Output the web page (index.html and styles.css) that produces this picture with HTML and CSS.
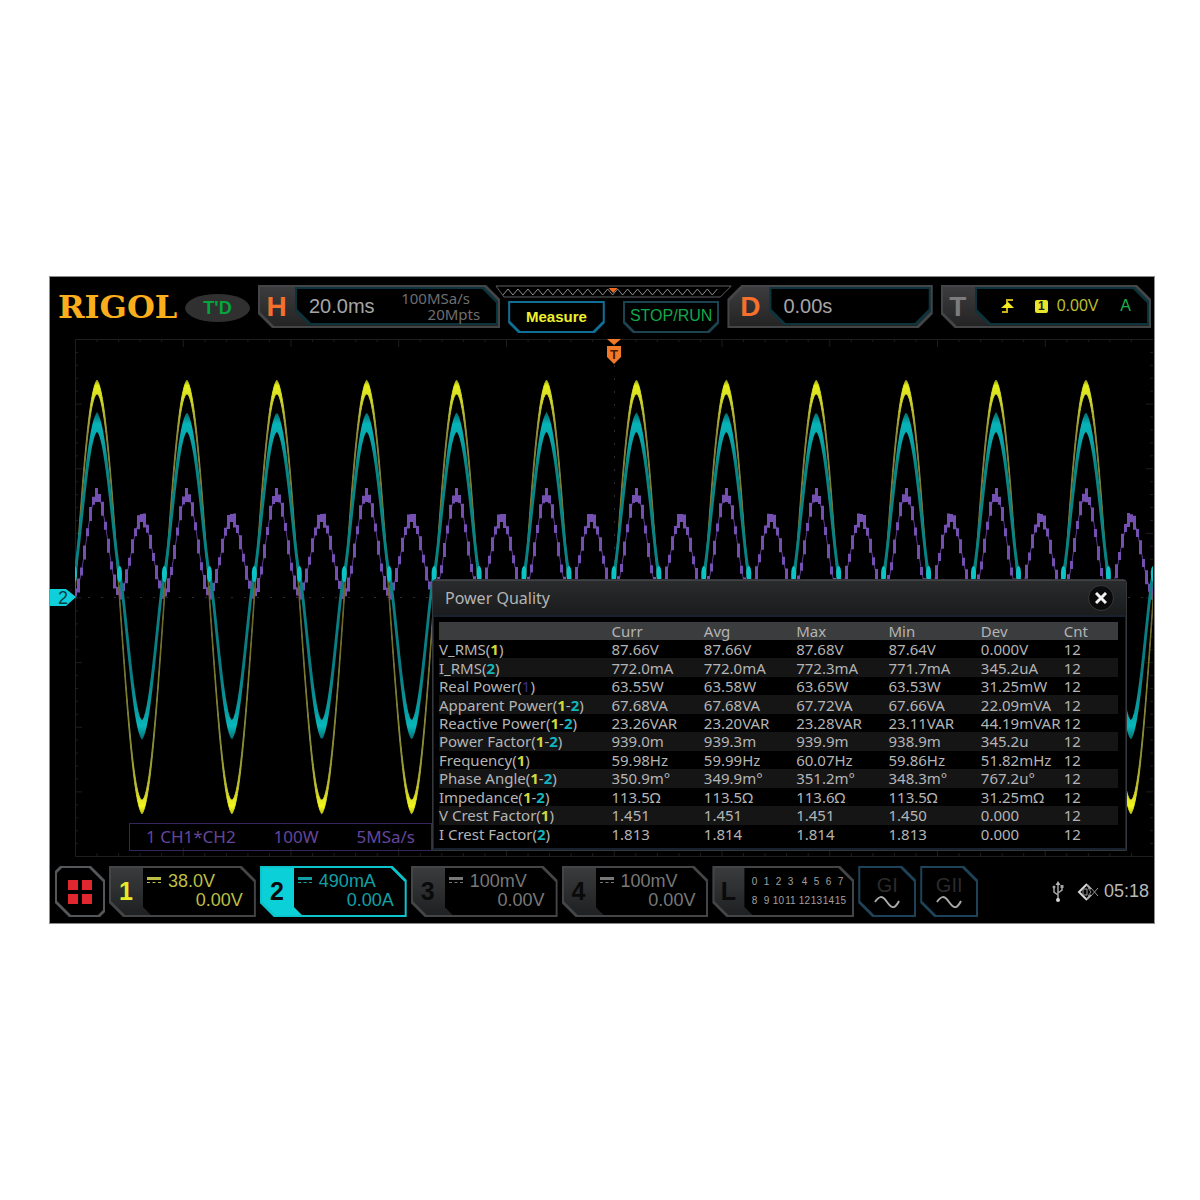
FILE: index.html
```html
<!DOCTYPE html>
<html lang="en">
<head>
    <meta charset="UTF-8">
    <meta name="viewport" content="width=device-width, initial-scale=1.0">
    <title>RIGOL - Power Quality</title>
    <link rel="stylesheet" href="styles.css">
</head>
<body>
    <main class="screen">
        <header class="topbar">
            <div class="logo">RIGOL</div>
            <div class="trig-state">T'D</div>

            <div class="frame panel">
                <span class="panel-tab orange">H</span>
                <div class="frame panel-value">
                    <span class="reading">20.0ms</span>
                    <div class="sampling">
                        <span>100MSa/s</span>
                        <span class="depth">20Mpts</span>
                    </div>
                </div>
            </div>

            <div class="center">
                <svg class="memory-bar" viewBox="0 0 238 13" preserveAspectRatio="none" aria-hidden="true">
                    <path d="M1 1H237L226 12H9Z" fill="none" stroke="#5c5f61"/>
                    <path id="zigzag" fill="none" stroke="#8c8e8f"/>
                    <path d="M114 3H123L118.500 8Z" fill="#f26a1b"/>
                </svg>
                <div class="center-buttons">
                    <button type="button" class="frame key key-measure">Measure</button>
                    <button type="button" class="frame key key-run">STOP/RUN</button>
                </div>
            </div>

            <div class="frame panel panel-delay">
                <span class="panel-tab orange">D</span>
                <div class="frame panel-value">
                    <span class="reading">0.00s</span>
                </div>
            </div>

            <div class="frame panel">
                <span class="panel-tab grey">T</span>
                <div class="frame panel-value trigger">
                    <svg width="14" height="16" viewBox="0 0 14 16" aria-hidden="true">
                        <path d="M1 14H6V2H12" fill="none" stroke="#c9b21c" stroke-width="2"/>
                        <path d="M0 10L7 4L13 10Z" fill="#f4ee20"/>
                    </svg>
                    <span class="source">1</span>
                    <span class="level">0.00V</span>
                    <span class="mode">A</span>
                </div>
            </div>
        </header>

        <section class="plot">
            <svg class="waves" viewBox="0 0 1104 528" aria-label="Waveforms">
                <defs>
                    <linearGradient id="gradCh1" gradientUnits="userSpaceOnUse" x1="0" y1="46" x2="0" y2="482">
                        <stop offset="0" stop-color="#8c9210"/>
                        <stop offset="0.015" stop-color="#e6ee1c"/>
                        <stop offset="0.05" stop-color="#d2d82c"/>
                        <stop offset="0.13" stop-color="#8f8a3c"/>
                        <stop offset="0.5" stop-color="#6b6428"/>
                        <stop offset="0.86" stop-color="#8f943a"/>
                        <stop offset="0.94" stop-color="#c8c82c"/>
                        <stop offset="0.98" stop-color="#f4f81c"/>
                        <stop offset="1" stop-color="#b0b610"/>
                    </linearGradient>
                    <linearGradient id="gradCh2" gradientUnits="userSpaceOnUse" x1="0" y1="78" x2="0" y2="406">
                        <stop offset="0" stop-color="#045c5e"/>
                        <stop offset="0.04" stop-color="#07b4b8"/>
                        <stop offset="0.08" stop-color="#08a8ac"/>
                        <stop offset="0.16" stop-color="#088684"/>
                        <stop offset="0.8" stop-color="#0a7c82"/>
                        <stop offset="0.92" stop-color="#08a0a4"/>
                        <stop offset="0.96" stop-color="#08b8bc"/>
                        <stop offset="1" stop-color="#057072"/>
                    </linearGradient>
                    <clipPath id="plotArea"><rect x="25" y="6" width="1078" height="518"/></clipPath>
                </defs>
                <path id="grid" fill="none" stroke="#1f1d1d"/>
                <path id="axes" fill="none" stroke="#332b2b" stroke-dasharray="2 11"/>
                <g clip-path="url(#plotArea)">
                    <path id="math" fill="none" stroke="#5a3a8c"/>
                    <path id="mathSamples" fill="none" stroke="#7450b0" stroke-width="3"/>
                    <path id="ch1" fill="url(#gradCh1)" stroke="url(#gradCh1)"/>
                    <path id="ch2" fill="url(#gradCh2)" stroke="url(#gradCh2)" stroke-width="2"/>
                    <g id="crossings" fill="#0bc4c8"></g>
                </g>
                <path d="M0 256H16L26 264L16 273H0Z" fill="#0fd0da"/>
                <text x="8" y="271" class="marker-ch2">2</text>
                <path d="M557 6H571L564 12Z" fill="#f07a2a"/>
                <path d="M557 13H571V24L564 31L557 24Z" fill="#f07a2a"/>
                <text x="564" y="26" class="marker-trig">T</text>
            </svg>

            <div class="math-label">
                <span>1 CH1*CH2</span>
                <span>100W</span>
                <span>5MSa/s</span>
            </div>

            <section class="window">
                <div class="window-head">
                    <h1>Power Quality</h1>
                    <button type="button" class="close" aria-label="Close">
                        <svg width="12" height="12" viewBox="0 0 12 12"><path d="M1 1L11 11M11 1L1 11" stroke="#f2f2f2" stroke-width="3"/></svg>
                    </button>
                </div>
                <div class="window-body">
                    <table>
                        <colgroup>
                            <col class="col-name"><col class="col-stat"><col class="col-stat"><col class="col-stat"><col class="col-stat"><col class="col-dev"><col>
                        </colgroup>
                        <thead>
                            <tr><th></th><th>Curr</th><th>Avg</th><th>Max</th><th>Min</th><th>Dev</th><th>Cnt</th></tr>
                        </thead>
                        <tbody>
                            <tr><td>V_RMS(<b class="c1">1</b>)</td><td>87.66V</td><td>87.66V</td><td>87.68V</td><td>87.64V</td><td>0.000V</td><td>12</td></tr>
                            <tr><td>I_RMS(<b class="c2">2</b>)</td><td>772.0mA</td><td>772.0mA</td><td>772.3mA</td><td>771.7mA</td><td>345.2uA</td><td>12</td></tr>
                            <tr><td>Real Power(<span class="cm">1</span>)</td><td>63.55W</td><td>63.58W</td><td>63.65W</td><td>63.53W</td><td>31.25mW</td><td>12</td></tr>
                            <tr><td>Apparent Power(<b class="c1">1</b>-<b class="c2">2</b>)</td><td>67.68VA</td><td>67.68VA</td><td>67.72VA</td><td>67.66VA</td><td>22.09mVA</td><td>12</td></tr>
                            <tr><td>Reactive Power(<b class="c1">1</b>-<b class="c2">2</b>)</td><td>23.26VAR</td><td>23.20VAR</td><td>23.28VAR</td><td>23.11VAR</td><td>44.19mVAR</td><td>12</td></tr>
                            <tr><td>Power Factor(<b class="c1">1</b>-<b class="c2">2</b>)</td><td>939.0m</td><td>939.3m</td><td>939.9m</td><td>938.9m</td><td>345.2u</td><td>12</td></tr>
                            <tr><td>Frequency(<b class="c1">1</b>)</td><td>59.98Hz</td><td>59.99Hz</td><td>60.07Hz</td><td>59.86Hz</td><td>51.82mHz</td><td>12</td></tr>
                            <tr><td>Phase Angle(<b class="c1">1</b>-<b class="c2">2</b>)</td><td>350.9m°</td><td>349.9m°</td><td>351.2m°</td><td>348.3m°</td><td>767.2u°</td><td>12</td></tr>
                            <tr><td>Impedance(<b class="c1">1</b>-<b class="c2">2</b>)</td><td>113.5Ω</td><td>113.5Ω</td><td>113.6Ω</td><td>113.5Ω</td><td>31.25mΩ</td><td>12</td></tr>
                            <tr><td>V Crest Factor(<b class="c1">1</b>)</td><td>1.451</td><td>1.451</td><td>1.451</td><td>1.450</td><td>0.000</td><td>12</td></tr>
                            <tr><td>I Crest Factor(<b class="c2">2</b>)</td><td>1.813</td><td>1.814</td><td>1.814</td><td>1.813</td><td>0.000</td><td>12</td></tr>
                        </tbody>
                    </table>
                </div>
            </section>
        </section>

        <footer class="bottombar">
            <button type="button" class="frame menu" aria-label="Menu">
                <span></span><span></span><span></span><span></span>
            </button>

            <div class="frame channel ch-1">
                <span class="channel-tab">1</span>
                <div class="channel-value">
                    <div class="scale"><i class="dc"></i>38.0V</div>
                    <div class="offset">0.00V</div>
                </div>
            </div>
            <div class="frame channel ch-2">
                <span class="channel-tab">2</span>
                <div class="channel-value">
                    <div class="scale"><i class="dc"></i>490mA</div>
                    <div class="offset">0.00A</div>
                </div>
            </div>
            <div class="frame channel">
                <span class="channel-tab">3</span>
                <div class="channel-value">
                    <div class="scale"><i class="dc"></i>100mV</div>
                    <div class="offset">0.00V</div>
                </div>
            </div>
            <div class="frame channel">
                <span class="channel-tab">4</span>
                <div class="channel-value">
                    <div class="scale"><i class="dc"></i>100mV</div>
                    <div class="offset">0.00V</div>
                </div>
            </div>

            <div class="frame channel logic">
                <span class="channel-tab">L</span>
                <div class="channel-value digits">
                    <span>0</span><span>1</span><span>2</span><span>3</span><i></i><span>4</span><span>5</span><span>6</span><span>7</span>
                    <span>8</span><span>9</span><span>10</span><span>11</span><i></i><span>12</span><span>13</span><span>14</span><span>15</span>
                </div>
            </div>

            <button type="button" class="frame gen">
                GI
                <svg width="26" height="14" viewBox="0 0 26 14"><path d="M1 7C5 1 8 0 13 7S21 14 25 6" fill="none" stroke="#a8a8a8" stroke-width="2"/></svg>
            </button>
            <button type="button" class="frame gen">
                GII
                <svg width="26" height="14" viewBox="0 0 26 14"><path d="M1 7C5 1 8 0 13 7S21 14 25 6" fill="none" stroke="#a8a8a8" stroke-width="2"/></svg>
            </button>

            <div class="status">
                <svg width="12" height="22" viewBox="0 0 12 22" aria-label="USB">
                    <path d="M6 3V18M6 14L2 11V6M6 12L10 9V5" fill="none" stroke="#a5a5a5" stroke-width="1.500"/>
                    <path d="M6 0L8.500 4H3.500Z" fill="#b5b5b5"/>
                    <path d="M8.500 4H11.500V7H8.500Z" fill="#a5a5a5"/>
                    <circle cx="2" cy="6" r="1.500" fill="#a5a5a5"/>
                    <circle cx="6" cy="19" r="2" fill="#d5d5d5"/>
                </svg>
                <svg width="22" height="18" viewBox="0 0 22 18" aria-label="Muted">
                    <path d="M10 1L2 9L10 17" fill="none" stroke="#d8d8d8" stroke-width="2"/>
                    <path d="M6 6H10V12H6Z" fill="none" stroke="#9a9a9a"/>
                    <path d="M10 2L14 6M10 16L14 12" fill="none" stroke="#aaa" stroke-width="2"/>
                    <path d="M11 5L14 9L11 13" fill="none" stroke="#888"/>
                    <path d="M14 5L21 13M21 5L14 13" stroke="#9a9a9a"/>
                </svg>
                <span>05:18</span>
            </div>
        </footer>
    </main>
    <script src="script.js"></script>
</body>
</html>
```

FILE: styles.css
```css
body {
    font-family: "Liberation Sans", Arial, sans-serif;
    background-color: #fff;
    margin: 0;
    padding: 277px 46px 40px 50px;
}

button {
    font-family: inherit;
    border: none;
    padding: 0;
    margin: 0;
    cursor: pointer;
}

.screen {
    background: #000;
    outline: 1px solid #8c8c8c;
}

/* Box with two corners cut off: edge colour outside, face colour inside */
.frame {
    --cut: 14px;
    --edge: #434546;
    --face: #000;
    --shape: polygon(0 0, calc(100% - var(--cut)) 0, 100% var(--cut), 100% 100%, var(--cut) 100%, 0 calc(100% - var(--cut)));
    position: relative;
    isolation: isolate;
    background: var(--edge);
    clip-path: var(--shape);
}

.frame::before {
    content: "";
    position: absolute;
    inset: 2px;
    z-index: -1;
    background: var(--face);
    clip-path: var(--shape);
}

/* Top bar */
.topbar {
    display: grid;
    grid-template-columns: 119px 65px 243fr 212fr 206fr 211fr;
    column-gap: 8px;
    align-items: start;
    height: 48px;
    padding: 8px 3px 0 8px;
}

.logo {
    font-family: "DejaVu Serif", serif;
    font-weight: bold;
    font-size: 32px;
    line-height: 44px;
    color: #fbae1c;
}

.trig-state {
    margin-top: 9px;
    background: #303030;
    border-radius: 50%;
    color: #06a53c;
    font-size: 18px;
    font-weight: bold;
    line-height: 28px;
    text-align: center;
}

.panel {
    --face: linear-gradient(#3c3c3e, #242425);
    display: flex;
    height: 43px;
}

.panel-tab {
    width: 37px;
    font-size: 28px;
    font-weight: bold;
    line-height: 44px;
    text-align: center;
}

.panel-tab.orange {
    color: #f4702c;
}

.panel-tab.grey {
    width: 34px;
    color: #7c7c7e;
}

.panel-value {
    --edge: #0d333d;
    flex: 1;
    display: flex;
    align-items: center;
    justify-content: space-between;
    margin: 2px 2px 3px 0;
    padding: 0 18px 0 14px;
}

.panel-delay {
    --shape: polygon(var(--cut) 0, 100% 0, 100% calc(100% - var(--cut)), calc(100% - var(--cut)) 100%, 0 100%, 0 var(--cut));
}

.panel-delay .panel-tab {
    width: 42px;
    padding-left: 4px;
    box-sizing: border-box;
}

.panel-delay .panel-value {
    --shape: polygon(0 0, 100% 0, 100% calc(100% - var(--cut)), calc(100% - var(--cut)) 100%, var(--cut) 100%, 0 calc(100% - var(--cut)));
}

.reading {
    font-size: 20px;
    color: #a6a6a8;
}

.sampling {
    display: flex;
    flex-direction: column;
    width: 79px;
    font-family: "Noto Sans", sans-serif;
    font-size: 15px;
    line-height: 16px;
    color: #6e6e70;
}

.sampling .depth {
    text-align: right;
}

.trigger {
    justify-content: flex-start;
    padding: 0 18px 0 26px;
}

.source {
    width: 13px;
    margin: 0 9px 0 20px;
    border-radius: 2px;
    background: #e8e62a;
    color: #222;
    font-size: 12px;
    font-weight: bold;
    line-height: 13px;
    text-align: center;
}

.level {
    margin-right: auto;
    font-size: 16px;
    color: #b9bd2c;
}

.mode {
    font-size: 16px;
    color: #1fae4c;
}

.memory-bar {
    display: block;
    width: calc(100% + 26px);
    height: 13px;
    margin: 0 -13px 3px;
}

.center-buttons {
    display: grid;
    grid-template-columns: 1fr 1fr;
    gap: 18px;
}

.key {
    --cut: 10px;
    --shape: polygon(0 0, 100% 0, 100% calc(100% - var(--cut)), calc(100% - var(--cut)) 100%, var(--cut) 100%, 0 calc(100% - var(--cut)));
    height: 32px;
    padding-bottom: 2px;
    white-space: nowrap;
}

.key-measure {
    --edge: #0f6f96;
    color: #eef02c;
    font-size: 15px;
    font-weight: bold;
}

.key-run {
    --edge: #1d4350;
    color: #12a84a;
    font-size: 16px;
}

/* Plot */
.plot {
    position: relative;
}

.waves {
    display: block;
    width: 100%;
}

.marker-ch2 {
    font-size: 18px;
    fill: #063c44;
}

.marker-trig {
    font-size: 13px;
    font-weight: bold;
    text-anchor: middle;
    fill: #4a1c06;
}

.math-label {
    position: absolute;
    left: 79px;
    right: 722px;
    bottom: 10px;
    display: flex;
    justify-content: space-between;
    padding: 0 16px;
    border: 1px solid #35265c;
    font-family: "Noto Sans", sans-serif;
    font-size: 17px;
    line-height: 26px;
    color: #64469c;
}

/* Power quality window */
.window {
    position: absolute;
    left: 382px;
    right: 27px;
    top: 246px;
    bottom: 10px;
    display: flex;
    flex-direction: column;
    box-sizing: border-box;
    border: 1px solid #34383c;
    border-radius: 4px 4px 0 0;
    background: #1d1e20;
    font-family: "Noto Sans", sans-serif;
    color: #b4b4b4;
}

.window-head {
    display: flex;
    align-items: center;
    justify-content: space-between;
    height: 34px;
    padding: 0 12px;
    border-top: 1px solid #404244;
    background: linear-gradient(#2a2b2d, #1a1b1d);
}

.window h1 {
    margin: 0;
    font-size: 16px;
    font-weight: normal;
}

.close {
    display: flex;
    align-items: center;
    justify-content: center;
    width: 26px;
    height: 26px;
    border: 1px solid #37383a;
    border-radius: 50%;
    background: #0a0a0a;
}

.window-body {
    flex: 1;
    padding: 5px 7px 0 5px;
    border: 2px solid #18222e;
    border-width: 2px 1px;
    background: #000;
}

table {
    width: 100%;
    height: 221px;
    border-collapse: collapse;
    table-layout: fixed;
    font-size: 15px;
    line-height: 18px;
    white-space: nowrap;
}

.col-name {
    width: 25.4%;
}

.col-stat {
    width: 13.6%;
}

.col-dev {
    width: 12.2%;
}

th, td {
    padding: 0;
    font-weight: normal;
    text-align: left;
}

thead {
    background: #3b3c3e;
}

tbody tr:nth-child(even) {
    background: #151516;
}

.c1 {
    color: #d2da3a;
}

.c2 {
    color: #14b4bc;
}

.cm {
    color: #3a2f86;
}

/* Bottom bar */
.bottombar {
    display: grid;
    grid-template-columns: 50px repeat(4, 147fr) 142fr 58fr 58fr 167fr;
    gap: 4px;
    padding: 5px 5px 6px 5px;
}

.bottombar .frame {
    height: 51px;
}

.menu {
    --edge: #55585a;
    --shape: polygon(5px 0, calc(100% - var(--cut)) 0, 100% var(--cut), 100% calc(100% - 5px), calc(100% - 5px) 100%, var(--cut) 100%, 0 calc(100% - var(--cut)), 0 5px);
    display: grid;
    grid-template-columns: 10px 10px;
    gap: 4px;
    place-content: center;
}

.menu span {
    height: 10px;
    background: #e0272f;
}

.channel {
    --face: linear-gradient(#3a3b3c, #1f2021);
    display: flex;
    color: #787878;
}

.channel-tab {
    width: 34px;
    font-size: 25px;
    font-weight: bold;
    line-height: 51px;
    text-align: center;
    color: #0a0a0a;
}

.channel-value {
    flex: 1;
    margin: 2px 2px 2px 0;
    padding: 4px 11px 0 4px;
    background: #000;
    clip-path: polygon(0 0, calc(100% - 14px) 0, 100% 14px, 100% 100%, 8px 100%, 0 calc(100% - 8px));
    font-size: 18px;
    line-height: 19px;
}

.scale {
    display: flex;
    gap: 7px;
}

.offset {
    text-align: right;
}

/* DC coupling: solid line over dashed line */
.dc {
    width: 14px;
    height: 2px;
    margin-top: 5px;
    border-top: 3px solid currentColor;
    border-bottom: 1px dashed currentColor;
}

.ch-1 {
    color: #bdbf45;
}

.ch-1 .channel-tab {
    color: #e8ea28;
}

.ch-2 {
    --edge: #0bc4cc;
    --face: #0bd0d8;
    color: #12a0a6;
}

.logic .channel-tab {
    width: 32px;
}

.digits {
    display: grid;
    grid-template-columns: repeat(4, 12px) 2px repeat(4, 12px);
    align-content: center;
    row-gap: 1px;
    padding: 0 0 0 4px;
    font-size: 10px;
    line-height: 18px;
    text-align: center;
    color: #a0a0a0;
}

.gen {
    --edge: #1e4358;
    display: flex;
    flex-direction: column;
    align-items: center;
    font-size: 20px;
    line-height: 20px;
    padding-top: 9px;
    color: #2b2b2d;
}

.status {
    display: flex;
    align-items: center;
    justify-content: flex-end;
    gap: 5px;
    font-size: 18px;
    color: #b8b8b8;
}

.status svg:first-child {
    margin-right: 8px;
}
```

FILE: script.js
```javascript
const PERIOD = 89.9;
const FIRST_PEAK = 47;
const ZERO = 264;
const LEFT = 25;
const RIGHT = 1103;

function set(id, d) {
    document.getElementById(id).setAttribute('d', d);
}

// distance to the nearest positive peak
function fromPeak(x) {
    const t = (x - FIRST_PEAK) / PERIOD;
    return Math.abs(t - Math.round(t)) * PERIOD;
}

function ch1(x) {
    return ZERO - 207 * Math.cos(2 * Math.PI * fromPeak(x) / PERIOD);
}

function ch2(x) {
    const d = fromPeak(x);
    if (d < 23) {
        return 244 - 150 * Math.pow(Math.cos(d / 23 * Math.PI / 2), 1.3);
    }
    const e = PERIOD / 2 - d;
    return 244 + 148 * Math.pow(Math.max(0, Math.cos(e / 22 * Math.PI / 2)), 1.3);
}

function math(x) {
    const c = Math.cos(2 * Math.PI * fromPeak(x) / PERIOD);
    return ZERO - 4 - (c > 0 ? 98 : 75) * c * c;
}

// closed band around a curve; its outer edge swells to a point at peaks and troughs
function band(f, half, swell, width) {
    const top = [];
    const bottom = [];
    for (let x = LEFT - 2; x <= RIGHT + 2; x += 0.5) {
        const d = fromPeak(x);
        const up = swell * Math.exp(-d / width);
        const down = swell * Math.exp(-(PERIOD / 2 - d) / width);
        top.push(x + ' ' + (f(x) - half - up).toFixed(1));
        bottom.unshift(x + ' ' + (f(x) + half + down).toFixed(1));
    }
    return 'M' + top.concat(bottom).join('L') + 'Z';
}

set('ch1', band(ch1, 4, 6, 4));
set('ch2', band(ch2, 4, 9, 5));

let line = '';
let samples = '';
let n = 0;
for (let x = LEFT + 0.5; x < RIGHT; x += 3, n++) {
    const y = math(x);
    const half = n % 2 ? 7 : 4;
    line += (n ? 'L' : 'M') + x + ' ' + y.toFixed(1);
    samples += `M${x} ${(y - half).toFixed(1)}V${(y + half).toFixed(1)}`;
}
set('math', line);
set('mathSamples', samples);

let blobs = '';
for (let k = 0; k < 13; k++) {
    const peak = FIRST_PEAK + k * PERIOD;
    for (const x of [peak - 22.5, peak + 22.5]) {
        blobs += `<ellipse cx="${x}" cy="241" rx="2.5" ry="8"/>`;
    }
}
document.getElementById('crossings').innerHTML = blobs;

// memory bar
let zigzag = 'M8 10';
for (let x = 8, up = true; x < 222; x += 5, up = !up) {
    zigzag += `L${x + 5} ${up ? 4 : 10}`;
}
set('zigzag', zigzag);

// frame with 10 x 8 divisions and 5 ticks in each
let grid = 'M25.5 6.5V523.5H1103M25.5 6.5H1103';
for (let i = 1; i < 50; i++) {
    const x = 25.5 + i * 21.55;
    const len = i % 5 ? 3 : 8;
    grid += `M${x} 6V${6 + len}M${x} 523V${523 - len}`;
}
for (let i = 1; i < 40; i++) {
    const y = 6.5 + i * 12.925;
    const len = i % 5 ? 3 : 7;
    grid += `M25 ${y}H${25 + len}M1103 ${y}H${1103 - len}`;
}
set('grid', grid);
set('axes', 'M564.5 6V523M25 264.5H1103');
```
